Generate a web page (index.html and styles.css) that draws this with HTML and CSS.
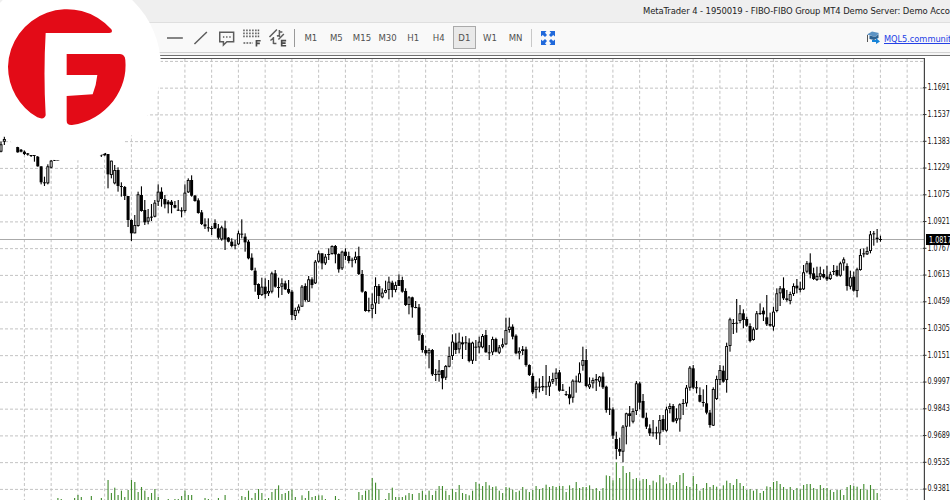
FILE: index.html
```html
<!DOCTYPE html>
<html lang="en">
<head>
<meta charset="utf-8">
<title>MetaTrader 4</title>
<link rel="stylesheet" href="styles.css">
</head>
<body>
<div class="app">
  <header class="titlebar"><span class="title">MetaTrader 4 - 1950019 - FIBO-FIBO Group MT4 Demo Server: Demo Account</span></header>
  <nav class="toolbar">
    <div class="tools">
      <svg class="tool" viewBox="0 0 26 26"><path d="M5 13H21"/></svg>
      <svg class="tool" viewBox="0 0 26 26"><path d="M6.5 19L19 7"/></svg>
      <svg class="tool" viewBox="0 0 26 26"><path d="M5.8 7.2H19.8V16.8H13L9.5 20V16.8H5.8Z"/><path d="M9 12h1.4M12.2 12h1.4M15.4 12h1.4"/></svg>
      <svg class="tool" viewBox="0 0 26 26"><g class="dots"><path d="M5 4.5V13M8 4.5V13M11 4.5V13M14 4.5V13M17 4.5V13M19.6 4.5V13"/><path d="M4.5 18H14"/></g><path class="bold" d="M17.6 21.5V15.8H21.8M17.6 18.5H21"/></svg>
      <svg class="tool" viewBox="0 0 26 26"><path d="M4.5 12L12 4.5M8.500 12V19M5.500 15.500L8.500 13M8.500 18.500H11.500M14.5 5V12M12 11L14.5 10.500M14.5 7H17.500M13.500 14.500L19 9"/><path class="bold" d="M21.3 15.6H16.8V20.8H21.3M16.8 18.2H20.8"/></svg>
    </div>
    <i class="rule"></i>
    <div class="periods"><span>M1</span><span>M5</span><span>M15</span><span>M30</span><span>H1</span><span>H4</span><span class="on">D1</span><span>W1</span><span>MN</span></div>
    <i class="rule light"></i>
    <svg class="expand" viewBox="0 0 14 14"><path d="M0 0H5.5L4 1.7L6 4L4 6L1.8 4L0 5.5ZM14 0V5.5L12.2 4L10 6L8 4L10 1.7L8.5 0ZM0 14V8.5L1.8 10L4 8L6 10L4 12.3L5.5 14ZM14 14H8.5L10 12.3L8 10L10 8L12.2 10L14 8.5Z"/></svg>
    <div class="community">
      <svg class="cap" viewBox="0 0 14 14"><path fill="#5c93c4" d="M1 3.5L6 .5L13 2L9.500 6Z"/><path fill="#2d6292" d="M3.500 4.500L9.500 6L12.500 3V7L8 9L3.500 8Z"/><path stroke="#555" fill="none" d="M1.500 4V11"/><path fill="#1683d8" d="M6 9H10V7L14 10.500L10 13V11H6Z"/></svg>
      <a>MQL5.community</a>
    </div>
  </nav>
  <svg class="chart" id="chart" viewBox="0 52 950 448" width="950" height="448"></svg>
  <div class="badge">
    <svg viewBox="0 0 400 400"><path d="M334 88A177 177 0 0 0 24 200A177 177 0 0 0 112 352Q133 361 137 346Q130 220 137 99H328Q340 99 334 88Z"/><path d="M200 162H360Q375 163 376 180Q382 246 340 303Q290 365 216 375Q200 376 200 362V288L278 283Q289 256 292 225H200Z"/></svg>
  </div>
</div>
<script src="chart.js"></script>
</body>
</html>
```
FILE: styles.css
```css
* { box-sizing: border-box; }
body { margin: 0; overflow: hidden; background: #fff; font-family: "DejaVu Sans Condensed", "DejaVu Sans", sans-serif; font-stretch: condensed; }
.app { position: relative; width: 950px; height: 500px; overflow: hidden; display: flex; flex-direction: column; }
.titlebar { height: 23px; flex: none; background: #efefef; border-bottom: 1px solid #dfdfdf; padding-left: 643px; overflow: hidden; }
.title { display: block; width: max-content; white-space: nowrap; font-size: 9.4px; line-height: 22px; color: #222; letter-spacing: -0.08px; }
.toolbar { height: 29px; flex: none; background: #f9f9f9; display: flex; align-items: center; padding-left: 162px; overflow: hidden; }
.tools { display: flex; }
.tool { width: 25.8px; height: 26px; fill: none; stroke: #5c5c5c; stroke-width: 1.5; }
.dots path { stroke-dasharray: 1.8 1.2; }
.tool .bold { stroke-width: 1.7; stroke: #4a4a4a; }
.rule { width: 1px; height: 18px; background: #999; margin: 0 3px; }
.rule.light { background: #c8c8c8; margin: 0 9px 0 3px; }
.periods { display: flex; }
.periods span { width: 25.6px; height: 23px; display: flex; align-items: center; justify-content: center; font-size: 9.5px; color: #505050; }
.periods .on { background: #e9e9e9; box-shadow: inset 0 0 0 1px #aaa; width: 23.6px; margin: 0 1px; }
.expand { width: 14px; height: 14px; fill: #2069db; }
.community { margin-left: auto; display: flex; align-items: center; gap: 4px; flex: none; width: 84px; }
.cap { width: 14px; height: 14px; flex: none; }
.community a { font-size: 9.2px; color: #2340e6; text-decoration: underline; white-space: nowrap; padding-top: 2px; letter-spacing: -0.05px; }
.chart { display: block; flex: none; }
.chart text { font-size: 8.5px; fill: #111; }
.chart .now { fill: #fff; }
.badge { position: absolute; left: -26.5px; top: -26.5px; width: 187px; height: 187px; border-radius: 50%; background: #fff; padding: 26.5px; }
.badge svg { display: block; width: 133.33px; height: 133.33px; fill: #e30b17; }
```
FILE: chart.js
```js
// Each series holds bars as "high low bodyTop bodyBottom", in thirds of a pixel
// below y0; a leading "w" marks a rising (hollow) bar.
const series = [
  { first: 0, y0: 125, bars: "w50 82 58 80,w35 60 42 50,,,,65 83 66 82,72 82 74 80,75 90 80 87,84 92 85 89,90 96 90 93,90 110 90 93,92 125 94 124,124 178 124 172,155 183 172 175,w118 178 124 175,w105 130 107 128,103 108 104 107,104 108 105 107,,,,,,,,,,,,,88 96 88 91,80 92 83 91,87 190 87 148,w107 160 107 150,w120 178 135 175,127 200 135 183,172 215 183 186,183 225 186 213,213 306 213 285,283 348 285 325,w270 325 300 325,w200 305 208 303,184 260 210 258,225 300 255 292,w252 298 277 290,237 288 275 278,w225 277 233 275,w178 243 200 230,187 245 200 222,210 250 222 238,225 265 230 238,225 265 230 240,228 250 240 248,225 258 254 257,247 277 256 259,w178 263 203 258,w160 204 165 202,151 215 165 212,210 230 212 228,220 266 226 264,255 300 262 297,280 312 298 304,280 320 307 310,303 330 309 312,283 312 294 310,297 343 310 338" },
  { first: 66, y0: 210, bars: "w47 92 52 88,32 120 55 88,81 97 83 95,85 112 95 108,90 118 104 107,w62 105 70 103,28 85 71 74,70 125 80 97,90 148 95 145,130 182 143 180,173 245 182 225,220 267 222 255,w203 258 230 255,205 265 230 252,w210 258 243 250,w185 250 190 245,180 233 190 230,203 263 231 234,w205 255 220 230,212 240 220 238,210 252 237 248,240 330 245 315,w293 330 300 318,w283 310 290 302,w225 290 230 290,220 275 228 270,w198 275 208 275,202 235 208 225,w150 222 155 220,w122 158 130 155,130 178 130 160,w132 165 140 160,115 150 132 135,w106 134 108 132,105 160 108 133,130 188 132 178,w122 180 125 175,115 150 125 138,125 160 138 153,143 172 149 152,w125 160 140 150,110 195 138 192,180 248 192 245,243 305 245 303,263 307 300 303,w250 325 283 297,w202 312 228 280,222 282 228 258,w235 265 248 262,w212 250 240 248,w200 268 215 240,212 262 218 240,w215 247 225 240,193 228 210 228" },
  { first: 120, y0: 290, bars: "-40 8 -30 5,-5 48 3 45,w18 73 22 45,20 83 22 52,33 55 51 54,42 152 52 135,130 188 135 180,168 197 180 190,w175 235 180 190,177 258 180 253,237 273 252 255,w210 275 242 255,240 298 240 265,w225 270 228 263,w170 232 198 230,w133 210 155 198,130 192 158 180,w128 190 155 178,140 207 157 163,138 180 157 160,145 217 158 213,w155 222 158 212,150 213 170 173,w140 190 155 172,w132 175 138 172,120 188 135 187,165 210 187 189,w140 195 147 187,143 187 147 185,w165 192 172 188,w145 175 163 170,w83 165 120 163,w83 128 110 120,103 148 110 140,133 193 137 190,w172 208 183 190,w168 195 178 183,170 230 178 225,223 258 225 255,250 312 258 307,w275 325 290 300,265 307 290 293,258 303 288 292,225 315 289 292,w258 318 275 290,w248 282 267 275,w235 287 248 267,240 305 247 302,282 303 299 302,303 318 312 315,290 343 313 325" },
  { first: 171, y0: 330, bars: "w148 218 152 203,137 188 152 155,w97 158 130 157,w50 122 90 107,57 172 90 168,w142 177 163 172,w143 175 150 160,132 183 147 151,w138 170 140 155,127 177 140 172,167 248 170 240,202 255 236 239,232 327 238 317,305 388 327 357,323 378 357 365,w285 397 290 365,w248 343 250 290,228 290 250 258,w235 280 243 275,w153 255 160 243,155 238 160 218,192 265 213 263,248 297 263 290,283 318 295 310,270 320 307 310,290 328 307 310,w255 345 270 310,255 305 267 300,w230 305 238 302,w220 250 228 237,222 277 228 275,w235 280 265 272,w220 305 223 268,207 255 219 222,w165 230 173 220,w108 182 113 173,105 177 115 173,153 190 172 175,172 217 195 215,178 230 216 219,165 253 220 248,240 293 248 285,w172 288 177 287,w137 210 147 207,w105 165 120 150,107 158 122 155,w38 188 48 150" },
  { first: 218, y0: 220, bars: "w293 395 298 378,297 342 309 312,237 338 308 311,w255 310 280 303,268 325 280 300,290 320 297 317,310 367 318 363,w322 362 328 360,w273 330 280 328,250 285 279 282,262 303 272 283,225 318 292 313,278 320 312 317,w260 332 275 320,w205 277 220 273,w198 258 205 220,172 240 205 235,210 245 235 240,w215 253 222 243,w190 228 198 222,177 220 197 205,185 217 205 210,w135 210 157 208,w123 160 130 155,100 175 128 163,143 180 160 177,w140 183 168 180,w140 180 160 170,148 175 162 172,137 183 170 178,w155 180 163 177,135 165 153 156,137 170 150 167,w125 170 130 167,w112 152 118 130,130 212 138 198,w152 208 172 200,155 215 170 212,w143 232 148 213,w87 152 105 150,85 112 100 103,w80 105 93 103,w33 100 43 93,33 77 40 42,27 68 53 57,47 65 57 60" }
];

// Volume bar heights in thirds of a pixel, keyed by the first bar of each run.
const volumes = {
  17: [6,3,0,0,0,6,15,9,0,0,12,0,0,6,0,60,21,37,15,28,9,30,60,54,24,39,28,9,21,33,9,0,0,3,0,3,3,12,28,15,15,0,0,0,6,3,0,0,6,0,15,0,0,0,0,12,9,28,6,21,33,21,3,6,24,33,44,18,21,27,31,9,0,14,6,27,9,12,14,14,3,0,0,12,3],
  107: [24,15,28,31,66,52,33,0,3,21,37,9,9,9,14,21,18,0,21,28,15,28,15,28,42,42,28,15,33,24,45,21,18,14,28,54,48,42,54,44,39,41,28,21,39,37,31,24,28,39,31,24,30,42,33,36,46,39,42,39,42,42,24,44,36,54,36,39,39,44,33,36,27,36,74,72,59,113,66,102,81,84],
  189: [63,66,58,63,63,45,58,53,75,68,48,51,45,54,75,81,42,39,72,48,28,36,51,39,45,40,32,44,58,51,45,63,51,42,30,33,28,32,21,27,41,39,54,57,48,39,32,39,30,36,32,45,48,48,36,32,45,36,36,30,24,30,30,15,39,45,42,40,33,48,30,45,33,21]
};

const prices = ["1.1691","1.1537","1.1383","1.1229","1.1075","1.0921","1.0767","1.0613","1.0459","1.0305","1.0151","0.9997","0.9843","0.9689","0.9535","0.9381"];

const barX = i => 0.9 + i * 3.344;
const rect = (x, y, w, h, fill) => `<rect x="${x.toFixed(2)}" y="${y.toFixed(2)}" width="${w}" height="${h.toFixed(2)}" fill="${fill}"/>`;
let out = rect(0, 52, 950, 1, "#d2d2d2") + rect(0, 53, 950, 2, "#f6f6f6") + rect(0, 55, 950, 1, "#707070");

for (let k = 0; k < 34; k++) {
  const x = 24.4 + k * 26.75;
  out += `<path d="M${x} 59V500" stroke="#c3c3c3" stroke-dasharray="3 2.3"/>`;
}
for (let k = 0; k < 17; k++) {
  const y = 61.4 + k * 26.75;
  out += `<path d="M0 ${y}H924" stroke="#c3c3c3" stroke-dasharray="3 2"/>`;
}
out += rect(0, 239, 924, 1, "#aaa");

for (const [first, list] of Object.entries(volumes))
  list.forEach((v, n) => {
    if (v) out += rect(barX(+first + n) - 0.4, 500 - v / 3, 1.1, v / 3, "#3f8a2b");
  });

for (const s of series)
  s.bars.split(",").forEach((bar, n) => {
    const i = s.first + n;
    if (!bar) return;
    const hollow = bar[0] === "w";
    const [hi, lo, top, bot] = bar.replace("w", "").split(" ").map(v => s.y0 + v / 3);
    const x = barX(i) + 0.1;
    out += rect(x - 0.55, hi, 1.1, lo - hi, "#000");
    out += rect(x - 1.5, top, 3, Math.max(1, bot - top), "#000");
    if (hollow && bot - top > 2) out += rect(x - 0.5, top + 0.9, 1, bot - top - 1.8, "#fff");
  });

out += rect(0, 58, 924, 1, "#555") + rect(923.8, 58, 1.2, 442, "#444");
prices.forEach((p, k) => {
  const y = 87.8 + k * 26.75;
  out += rect(923, y - 0.5, 3.5, 1, "#333");
  out += `<text x="927.5" y="${(y + 2.2).toFixed(1)}" textLength="22.3" lengthAdjust="spacingAndGlyphs">${p}</text>`;
});
out += rect(926, 234, 24, 11, "#000");
out += `<text class="now" x="929" y="242.700" textLength="22.5" lengthAdjust="spacingAndGlyphs">1.0817</text>`;
document.getElementById("chart").innerHTML = out;
```
